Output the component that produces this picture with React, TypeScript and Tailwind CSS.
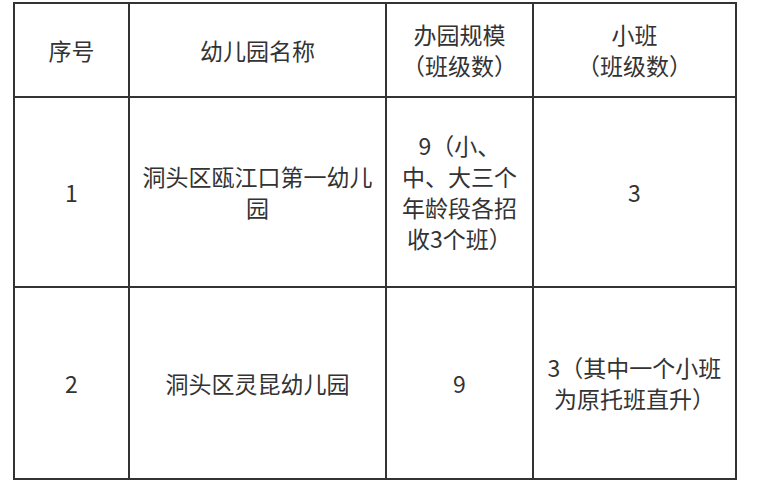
const rows = [
  {
    no: '1',
    name: '洞头区瓯江口第一幼儿园',
    scale: '9（小、中、大三个年龄段各招收3个班）',
    small: '3',
    h: 'h-[190px]',
  },
  {
    no: '2',
    name: '洞头区灵昆幼儿园',
    scale: '9',
    small: '3（其中一个小班为原托班直升）',
    h: 'h-[192px]',
  },
];

const cell = 'border-2 border-[#333] px-[10px] text-center align-middle';

export default function App() {
  return (
    <div
      className="w-[766px] h-[500px] bg-white pl-[13px] pt-[2px] text-[23px] leading-[31px] text-[#333]"
      style={{ fontFamily: '"Noto Sans CJK SC", "Noto Sans", sans-serif' }}
    >
      <table className="table-fixed border-collapse w-[722px]">
        <colgroup>
          <col className="w-[115px]" />
          <col className="w-[257px]" />
          <col className="w-[147px]" />
          <col className="w-[203px]" />
        </colgroup>
        <thead>
          <tr className="h-[94px]">
            <th className={`${cell} font-normal`}>序号</th>
            <th className={`${cell} font-normal`}>幼儿园名称</th>
            <th className={`${cell} font-normal`}>
              办园规模
              <br />
              （班级数）
            </th>
            <th className={`${cell} font-normal`}>
              小班
              <br />
              （班级数）
            </th>
          </tr>
        </thead>
        <tbody>
          {rows.map((r) => (
            <tr key={r.no} className={r.h}>
              <td className={cell}>{r.no}</td>
              <td className={cell}>{r.name}</td>
              <td className={cell}>{r.scale}</td>
              <td className={cell}>{r.small}</td>
            </tr>
          ))}
        </tbody>
      </table>
    </div>
  );
}
